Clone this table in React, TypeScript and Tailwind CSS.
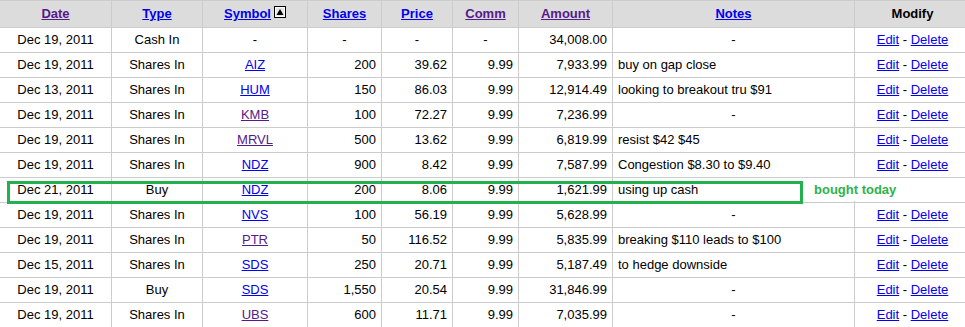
import React from "react";

type Row = {
  date: string;
  type: string;
  symbol: string;
  visited?: boolean;
  shares: string;
  price: string;
  comm: string;
  amount: string;
  notes: string;
  highlight?: boolean;
};

const rows: Row[] = [
  { date: "Dec 19, 2011", type: "Cash In", symbol: "", shares: "-", price: "-", comm: "-", amount: "34,008.00", notes: "-" },
  { date: "Dec 19, 2011", type: "Shares In", symbol: "AIZ", shares: "200", price: "39.62", comm: "9.99", amount: "7,933.99", notes: "buy on gap close" },
  { date: "Dec 13, 2011", type: "Shares In", symbol: "HUM", shares: "150", price: "86.03", comm: "9.99", amount: "12,914.49", notes: "looking to breakout tru $91" },
  { date: "Dec 19, 2011", type: "Shares In", symbol: "KMB", visited: true, shares: "100", price: "72.27", comm: "9.99", amount: "7,236.99", notes: "-" },
  { date: "Dec 19, 2011", type: "Shares In", symbol: "MRVL", visited: true, shares: "500", price: "13.62", comm: "9.99", amount: "6,819.99", notes: "resist $42 $45" },
  { date: "Dec 19, 2011", type: "Shares In", symbol: "NDZ", shares: "900", price: "8.42", comm: "9.99", amount: "7,587.99", notes: "Congestion $8.30 to $9.40" },
  { date: "Dec 21, 2011", type: "Buy", symbol: "NDZ", shares: "200", price: "8.06", comm: "9.99", amount: "1,621.99", notes: "using up cash", highlight: true },
  { date: "Dec 19, 2011", type: "Shares In", symbol: "NVS", shares: "100", price: "56.19", comm: "9.99", amount: "5,628.99", notes: "-" },
  { date: "Dec 19, 2011", type: "Shares In", symbol: "PTR", visited: true, shares: "50", price: "116.52", comm: "9.99", amount: "5,835.99", notes: "breaking $110 leads to $100" },
  { date: "Dec 15, 2011", type: "Shares In", symbol: "SDS", shares: "250", price: "20.71", comm: "9.99", amount: "5,187.49", notes: "to hedge downside" },
  { date: "Dec 19, 2011", type: "Buy", symbol: "SDS", shares: "1,550", price: "20.54", comm: "9.99", amount: "31,846.99", notes: "-" },
  { date: "Dec 19, 2011", type: "Shares In", symbol: "UBS", visited: true, shares: "600", price: "11.71", comm: "9.99", amount: "7,035.99", notes: "-" },
];

const cell = "flex items-center h-[25px] border-b border-r border-[#cccccc] px-[5px] whitespace-nowrap";
const head = "flex items-center justify-center h-[28px] border-t border-b border-r border-[#cccccc] bg-[#dcdcdc] font-bold whitespace-nowrap";
const blue = "text-[#0000ee] underline";
const purple = "text-[#551a8b] underline";

function SortIcon() {
  return (
    <svg width="12" height="12" viewBox="0 0 12 12" className="ml-[3px] -mt-[4px]">
      <rect x="0.5" y="0.5" width="11" height="11" fill="#e6e6e6" stroke="#000" />
      <rect x="1.5" y="1.5" width="9" height="9" fill="none" stroke="#fff" />
      <path d="M6 3 L9.5 9 L2.5 9 Z" fill="#000" />
    </svg>
  );
}

export default function App() {
  return (
    <div className="relative w-[965px] h-[327px] overflow-hidden bg-white text-black text-[13px] font-['Liberation_Sans',Arial,sans-serif]">
      <div className="grid grid-cols-[112px_91px_105px_74px_71px_66px_94px_242px_116px]">
        <div className={head}><a className={purple}>Date</a></div>
        <div className={head}><a className={blue}>Type</a></div>
        <div className={head}>
          <a className={blue}>Symbol </a>
          <SortIcon />
        </div>
        <div className={head}><a className={blue}>Shares</a></div>
        <div className={head}><a className={blue}>Price</a></div>
        <div className={head}><a className={purple}>Comm</a></div>
        <div className={head}><a className={purple}>Amount</a></div>
        <div className={head}><a className={blue}>Notes</a></div>
        <div className={head}>Modify</div>

        {rows.map((r, i) => (
          <React.Fragment key={i}>
            <div className={`${cell} justify-center`}>{r.date}</div>
            <div className={`${cell} justify-center`}>{r.type}</div>
            <div className={`${cell} justify-center`}>
              {r.symbol ? <a className={r.visited ? purple : blue}>{r.symbol}</a> : "-"}
            </div>
            <div className={`${cell} ${r.shares === "-" ? "justify-center" : "justify-end"}`}>{r.shares}</div>
            <div className={`${cell} ${r.price === "-" ? "justify-center" : "justify-end"}`}>{r.price}</div>
            <div className={`${cell} ${r.comm === "-" ? "justify-center" : "justify-end"}`}>{r.comm}</div>
            <div className={`${cell} justify-end`}>{r.amount}</div>
            <div className={`${cell} ${r.notes === "-" ? "justify-center" : "justify-start"}`}>{r.notes}</div>
            <div className={`${cell} justify-center`}>
              {!r.highlight && (
                <span>
                  <a className={blue}>Edit</a> - <a className={blue}>Delete</a>
                </span>
              )}
            </div>
          </React.Fragment>
        ))}
      </div>

      {/* today's trade marker */}
      <div className="absolute left-[7px] top-[181px] w-[796px] h-[23px] border-[3px] border-[#22b14c]" />
      <div className="absolute left-[806px] top-[178px] w-[146px] h-[23px] bg-white flex items-center pl-[8px] font-bold text-[#2db34a]">
        bought today
      </div>
    </div>
  );
}
